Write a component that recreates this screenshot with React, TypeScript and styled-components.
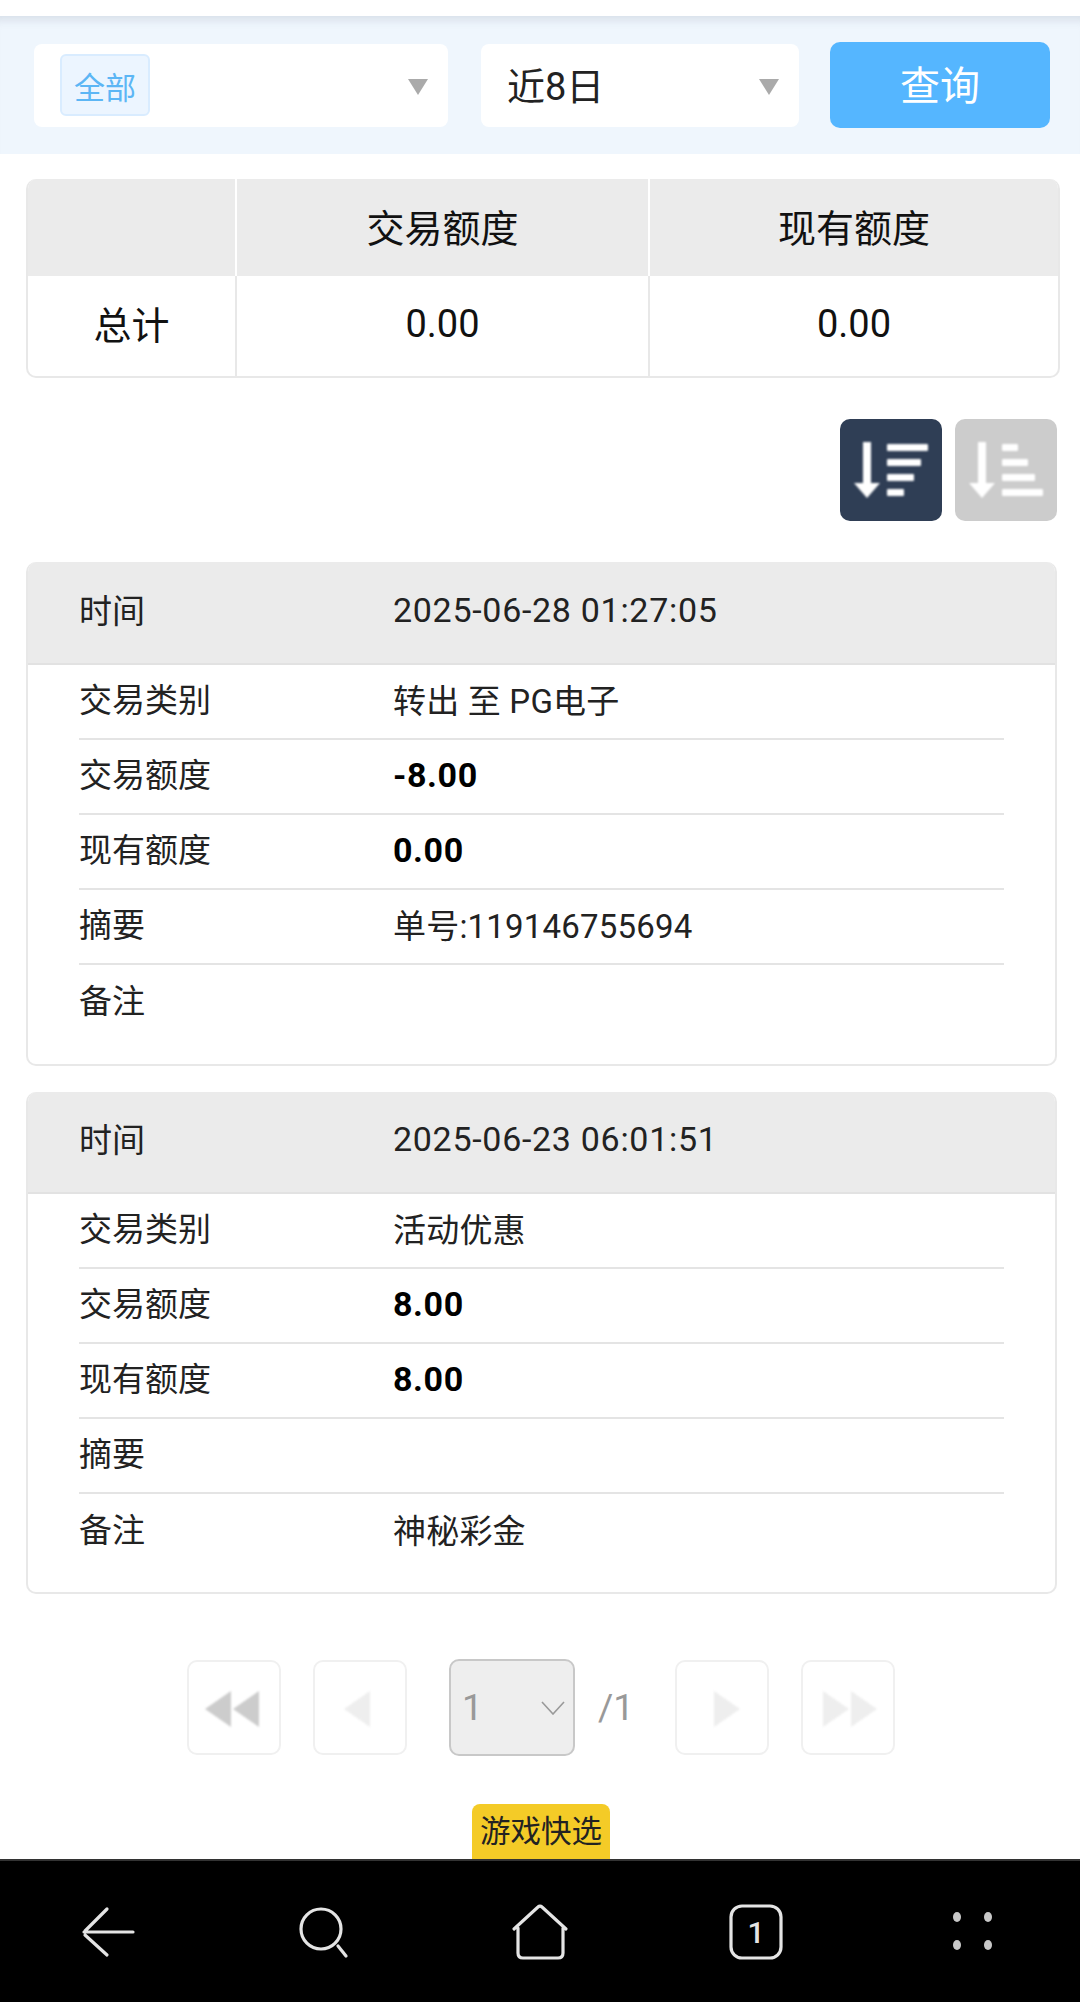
import React from 'react';
import styled, { createGlobalStyle } from 'styled-components';

const Global = createGlobalStyle`
  html, body { margin: 0; padding: 0; background: #fff; }
  body { font-family: Roboto, "Noto Sans CJK SC", sans-serif; color: #000; }
  * { box-sizing: border-box; }
`;

const Page = styled.div`
  width: 1080px;
  height: 2002px;
  display: flex;
  flex-direction: column;
  padding-top: 16px;
  overflow: hidden;
`;

const FilterBar = styled.div`
  height: 138px;
  flex: none;
  display: flex;
  align-items: center;
  padding-left: 34px;
  background: #eff6fd;
  box-shadow: inset 0 12px 10px -8px rgba(120, 130, 150, 0.2);
`;

const Select = styled.div<{ $w: number; $mr: number }>`
  width: ${(p) => p.$w}px;
  height: 83px;
  margin-right: ${(p) => p.$mr}px;
  display: flex;
  align-items: center;
  justify-content: space-between;
  padding: 0 20px 0 26px;
  background: #fff;
  border-radius: 8px;
  font-size: 38px;
  color: #222;
`;

const SelectText = styled.span`
  padding-bottom: 3px;
`;

const Tag = styled.span`
  width: 90px;
  height: 62px;
  display: flex;
  align-items: center;
  justify-content: center;
  background: #ecf5ff;
  border: 2px solid #d9ecff;
  border-radius: 6px;
  color: #5cb6f5;
  font-size: 31px;
`;

const Caret = styled.span`
  width: 0;
  height: 0;
  margin-top: 4px;
  border-left: 10px solid transparent;
  border-right: 10px solid transparent;
  border-top: 16px solid #aaa;
`;

const QueryButton = styled.button`
  width: 220px;
  height: 86px;
  padding: 0 0 5px;
  border: 0;
  border-radius: 10px;
  background: #55b6ff;
  color: #fff;
  font: inherit;
  font-size: 40px;
`;

const Summary = styled.div`
  width: 1034px;
  height: 199px;
  flex: none;
  margin: 25px 0 0 26px;
  display: grid;
  grid-template-columns: 209px 413px 1fr;
  grid-template-rows: 97px 1fr;
  border: 2px solid #e8e8e8;
  border-top: 0;
  border-radius: 10px;
  overflow: hidden;
  font-size: 38px;
`;

const SummaryHead = styled.div`
  display: flex;
  align-items: center;
  justify-content: center;
  padding-bottom: 5px;
  background: #ebebeb;
  color: #111;
  border-right: 2px solid #fff;
  &:nth-child(3) { border-right: 0; }
`;

const SummaryCell = styled.div<{ $cjk?: boolean }>`
  display: flex;
  align-items: center;
  justify-content: center;
  padding-bottom: ${(p) => (p.$cjk ? 8 : 4)}px;
  color: #111;
  border-right: 2px solid #e8e8e8;
  &:last-child { border-right: 0; }
`;

const SortBar = styled.div`
  flex: none;
  display: flex;
  justify-content: flex-end;
  gap: 13px;
  margin: 41px 23px 0 0;
`;

const SortButton = styled.div<{ $active?: boolean }>`
  width: 102px;
  height: 102px;
  border-radius: 10px;
  background: ${(p) => (p.$active ? '#2f3e55' : '#cccccc')};
  svg { display: block; filter: blur(0.9px); }
`;

const Card = styled.div<{ $mt: number; $h: number }>`
  width: 1031px;
  height: ${(p) => p.$h}px;
  flex: none;
  margin: ${(p) => p.$mt}px 0 0 26px;
  border: 2px solid #e8e8e8;
  border-top: 0;
  border-radius: 10px;
  overflow: hidden;
`;

const CardHead = styled.div<{ $h: number }>`
  height: ${(p) => p.$h}px;
  display: flex;
  align-items: center;
  padding-left: 51px;
  background: #ebebeb;
  border-bottom: 2px solid #e2e2e2;
`;

const Row = styled.div`
  height: 75px;
  margin: 0 51px;
  display: flex;
  align-items: center;
  border-bottom: 2px solid #e4e4e4;
  &:last-child { border-bottom: 0; }
`;

const Label = styled.span`
  width: 314px;
  flex: none;
  padding-bottom: 8px;
  font-size: 33px;
  color: #222;
`;

const Value = styled.span<{ $bold?: boolean; $time?: boolean }>`
  padding-bottom: ${(p) => (p.$bold ? 3 : 6)}px;
  font-size: ${(p) => (p.$bold || p.$time ? 34 : 33)}px;
  letter-spacing: ${(p) => (p.$bold ? 0.6 : p.$time ? 0.7 : 0.2)}px;
  color: ${(p) => (p.$bold ? '#000' : '#222')};
  font-weight: ${(p) => (p.$bold ? 700 : 400)};
`;

const Pager = styled.div`
  flex: none;
  display: flex;
  align-items: center;
  margin: 65px 0 0 187px;
`;

const PageButton = styled.div<{ $mr: number }>`
  width: 94px;
  height: 95px;
  flex: none;
  margin-right: ${(p) => p.$mr}px;
  border: 2px solid #f0f0f0;
  border-radius: 10px;
  svg { display: block; filter: blur(1px); }
`;

const PageGroup = styled.div`
  width: 226px;
  flex: none;
  display: flex;
  align-items: center;
  gap: 23px;
`;

const PageSelect = styled.div`
  width: 126px;
  height: 97px;
  flex: none;
  display: flex;
  align-items: center;
  justify-content: space-between;
  padding: 0 8px 0 11px;
  background: #eeeeee;
  border: 2px solid #c8c8c8;
  border-radius: 10px;
  color: #999;
  font-size: 37px;
`;

const PageTotal = styled.span`
  color: #999;
  font-size: 37px;
`;

const GameTab = styled.div`
  width: 138px;
  height: 55px;
  flex: none;
  margin: auto 0 0 472px;
  padding-bottom: 6px;
  display: flex;
  align-items: center;
  justify-content: center;
  background: #f4cb27;
  border-radius: 8px 8px 0 0;
  color: #222;
  font-size: 30.5px;
  white-space: nowrap;
`;

const NavBar = styled.div`
  height: 143px;
  flex: none;
  display: flex;
  align-items: center;
  background: #000;
  border-top: 2px solid #333;
`;

const NavSlot = styled.div`
  flex: 1;
  display: flex;
  justify-content: center;
  svg { display: block; }
`;

const NavCount = styled.text`
  font-family: Roboto, sans-serif;
  font-size: 30px;
  font-weight: 500;
  fill: #e4e4e4;
  text-anchor: middle;
`;

const Tri = ({ dir, x, c }: { dir: 'l' | 'r'; x: number; c: string }) => (
  <polygon
    points={dir === 'l' ? `${x},35 ${x + 26},17 ${x + 26},53` : `${x},17 ${x + 26},35 ${x},53`}
    fill={c}
  />
);

const PagerIcon = ({ tris }: { tris: { dir: 'l' | 'r'; x: number; c: string }[] }) => (
  <svg width="90" height="93" viewBox="0 0 90 93">
    <g transform="translate(0,12)">
      {tris.map((t, i) => (
        <Tri key={i} {...t} />
      ))}
    </g>
  </svg>
);

const SortIcon = ({ widths }: { widths: number[] }) => (
  <svg width="102" height="102" viewBox="0 0 102 102" fill="#fff">
    <rect x="23" y="23" width="8" height="44" />
    <polygon points="14,64 40,64 27,79" />
    {widths.map((w, i) => (
      <rect key={i} x="47" y={25 + i * 15} width={w} height="7" rx="1" />
    ))}
  </svg>
);

const NavIcon = ({ children }: { children: React.ReactNode }) => (
  <NavSlot>
    <svg width="64" height="64" viewBox="0 0 64 64" fill="none" stroke="#e4e4e4" strokeWidth="3.2" strokeLinecap="round" strokeLinejoin="round">
      {children}
    </svg>
  </NavSlot>
);

const records = [
  {
    time: '2025-06-28 01:27:05', type: '转出 至 PG电子', amount: '-8.00', balance: '0.00',
    summary: '单号:119146755694', note: '', mt: 41, h: 504, head: 103,
  },
  {
    time: '2025-06-23 06:01:51', type: '活动优惠', amount: '8.00', balance: '8.00',
    summary: '', note: '神秘彩金', mt: 26, h: 502, head: 102,
  },
];

export default function App() {
  return (
    <Page>
      <Global />
      <FilterBar>
        <Select $w={414} $mr={33}>
          <Tag>全部</Tag>
          <Caret />
        </Select>
        <Select $w={318} $mr={31}>
          <SelectText>近8日</SelectText>
          <Caret />
        </Select>
        <QueryButton>查询</QueryButton>
      </FilterBar>

      <Summary>
        <SummaryHead />
        <SummaryHead>交易额度</SummaryHead>
        <SummaryHead>现有额度</SummaryHead>
        <SummaryCell $cjk>总计</SummaryCell>
        <SummaryCell>0.00</SummaryCell>
        <SummaryCell>0.00</SummaryCell>
      </Summary>

      <SortBar>
        <SortButton $active><SortIcon widths={[41, 34, 27, 17]} /></SortButton>
        <SortButton><SortIcon widths={[16, 26, 33, 41]} /></SortButton>
      </SortBar>

      {records.map((r) => (
        <Card key={r.time} $mt={r.mt} $h={r.h}>
          <CardHead $h={r.head}>
            <Label>时间</Label>
            <Value $time>{r.time}</Value>
          </CardHead>
          <Row><Label>交易类别</Label><Value>{r.type}</Value></Row>
          <Row><Label>交易额度</Label><Value $bold>{r.amount}</Value></Row>
          <Row><Label>现有额度</Label><Value $bold>{r.balance}</Value></Row>
          <Row><Label>摘要</Label><Value>{r.summary}</Value></Row>
          <Row><Label>备注</Label><Value>{r.note}</Value></Row>
        </Card>
      ))}

      <Pager>
        <PageButton $mr={32}>
          <PagerIcon tris={[{ dir: 'l', x: 16, c: '#cccccc' }, { dir: 'l', x: 44, c: '#cccccc' }]} />
        </PageButton>
        <PageButton $mr={42}>
          <PagerIcon tris={[{ dir: 'l', x: 29, c: '#eeeeee' }]} />
        </PageButton>
        <PageGroup>
          <PageSelect>
            1
            <svg width="24" height="14" viewBox="0 0 24 14" fill="none" stroke="#999" strokeWidth="1.6">
              <path d="M1 1 L12 13 L23 1" />
            </svg>
          </PageSelect>
          <PageTotal>/1</PageTotal>
        </PageGroup>
        <PageButton $mr={32}>
          <PagerIcon tris={[{ dir: 'r', x: 37, c: '#eeeeee' }]} />
        </PageButton>
        <PageButton $mr={0}>
          <PagerIcon tris={[{ dir: 'r', x: 20, c: '#eeeeee' }, { dir: 'r', x: 48, c: '#eeeeee' }]} />
        </PageButton>
      </Pager>

      <GameTab>游戏快选</GameTab>

      <NavBar>
        <NavIcon>
          <path d="M31 9 L9 31 M8 32 H57 M9 35 L31 55" />
        </NavIcon>
        <NavIcon>
          <circle cx="29" cy="29" r="20" />
          <path d="M46 46 L54 56" />
        </NavIcon>
        <NavIcon>
          <path d="M6 29 L30 7 Q32 5 34 7 L58 29 M10 28 V53 Q10 58 15 58 H50 Q55 58 55 53 V28" />
        </NavIcon>
        <NavIcon>
          <rect x="7" y="6" width="50" height="52" rx="11" />
          <NavCount x="32" y="43" stroke="none">1</NavCount>
        </NavIcon>
        <NavIcon>
          <g fill="#c8c8c8" stroke="none">
            <ellipse cx="17" cy="17" rx="4" ry="5" />
            <ellipse cx="48" cy="17" rx="4" ry="5" />
            <ellipse cx="17" cy="45" rx="4" ry="5" />
            <ellipse cx="48" cy="45" rx="4" ry="5" />
          </g>
        </NavIcon>
      </NavBar>
    </Page>
  );
}
